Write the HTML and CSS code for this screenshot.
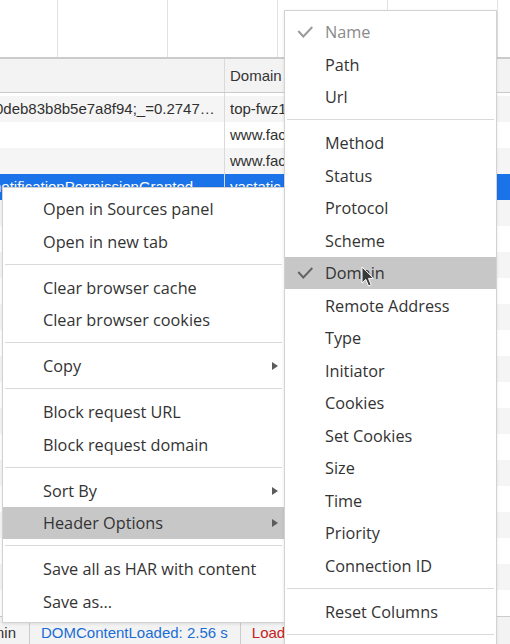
FILE: index.html
```html
<!DOCTYPE html>
<html>
<head>
<meta charset="utf-8">
<link rel="stylesheet" href="styles.css">
</head>
<body>
<div class="screen">
  <div class="overview">
    <div class="ov-col first"></div>
    <div class="ov-col"></div>
    <div class="ov-col"></div>
    <div class="ov-col"></div>
    <div class="ov-col"></div>
  </div>
  <div class="grid-head">
    <div class="cell name"></div>
    <div class="cell domain">Domain</div>
  </div>
  <div class="grid-body">
    <div class="row spacer"><div class="cell name"></div><div class="cell domain"></div></div>
    <div class="row alt"><div class="cell name"><span class="shift s5">0deb83b8b5e7a8f94;_=0.2747…</span></div><div class="cell domain">top-fwz1.mail.ru</div></div>
    <div class="row"><div class="cell name"></div><div class="cell domain">www.facebook.com</div></div>
    <div class="row alt"><div class="cell name"></div><div class="cell domain">www.facebook.com</div></div>
    <div class="row sel"><div class="cell name"><span class="shift s7">notificationPermissionGranted</span></div><div class="cell domain">yastatic.net</div></div>
    <div class="row alt"><div class="cell name"></div><div class="cell domain"></div></div>
    <div class="row"><div class="cell name"></div><div class="cell domain"></div></div>
    <div class="row alt"><div class="cell name"></div><div class="cell domain"></div></div>
    <div class="row"><div class="cell name"></div><div class="cell domain"></div></div>
    <div class="row alt"><div class="cell name"></div><div class="cell domain"></div></div>
    <div class="row"><div class="cell name"></div><div class="cell domain"></div></div>
    <div class="row alt"><div class="cell name"></div><div class="cell domain"></div></div>
    <div class="row"><div class="cell name"></div><div class="cell domain"></div></div>
    <div class="row alt"><div class="cell name"></div><div class="cell domain"></div></div>
    <div class="row"><div class="cell name"></div><div class="cell domain"></div></div>
    <div class="row alt"><div class="cell name"></div><div class="cell domain"></div></div>
    <div class="row"><div class="cell name"></div><div class="cell domain"></div></div>
    <div class="row alt"><div class="cell name"></div><div class="cell domain"></div></div>
    <div class="row"><div class="cell name"></div><div class="cell domain"></div></div>
    <div class="row alt"><div class="cell name"></div><div class="cell domain"></div></div>
    <div class="row"><div class="cell name"></div><div class="cell domain"></div></div>
  </div>
  <div class="status">
    <div class="st finish"><span>Finish: 1.2 min</span></div>
    <div class="st dcl">DOMContentLoaded: 2.56 s</div>
    <div class="st load">Load: 3.41 s</div>
  </div>

  <div class="menu main">
    <div class="item">Open in Sources panel</div>
    <div class="item">Open in new tab</div>
    <div class="sep"></div>
    <div class="item">Clear browser cache</div>
    <div class="item">Clear browser cookies</div>
    <div class="sep"></div>
    <div class="item">Copy<span class="arrow"></span></div>
    <div class="sep"></div>
    <div class="item">Block request URL</div>
    <div class="item">Block request domain</div>
    <div class="sep"></div>
    <div class="item">Sort By<span class="arrow"></span></div>
    <div class="item hl">Header Options<span class="arrow"></span></div>
    <div class="sep"></div>
    <div class="item">Save all as HAR with content</div>
    <div class="item">Save as...</div>
  </div>

  <div class="menu sub">
    <div class="item disabled"><svg class="check light" width="16" height="12" viewBox="0 0 16 12"><polyline points="1.3,5 6.3,10.5 15.3,1" /></svg>Name</div>
    <div class="item">Path</div>
    <div class="item">Url</div>
    <div class="sep"></div>
    <div class="item">Method</div>
    <div class="item">Status</div>
    <div class="item">Protocol</div>
    <div class="item">Scheme</div>
    <div class="item hl"><svg class="check" width="16" height="12" viewBox="0 0 16 12"><polyline points="1.3,5 6.3,10.5 15.3,1" /></svg>Domain</div>
    <div class="item">Remote Address</div>
    <div class="item">Type</div>
    <div class="item">Initiator</div>
    <div class="item">Cookies</div>
    <div class="item">Set Cookies</div>
    <div class="item">Size</div>
    <div class="item">Time</div>
    <div class="item">Priority</div>
    <div class="item">Connection ID</div>
    <div class="sep"></div>
    <div class="item">Reset Columns</div>
    <div class="sep"></div>
    <div class="item">Response Headers<span class="arrow"></span></div>
  </div>

  <svg class="cursor" width="14" height="22" viewBox="0 0 14 22">
    <path d="M1 1 L1 17 L4.8 13.4 L7.6 20 L10.2 18.9 L7.5 12.4 L12.6 12.4 Z" />
  </svg>
</div>
</body>
</html>
```

FILE: styles.css
```css
* { box-sizing: border-box; }
html, body { margin: 0; padding: 0; }
body {
  width: 510px;
  height: 644px;
  overflow: hidden;
  background: #fff;
  font-family: "Liberation Sans", Arial, sans-serif;
  font-size: 15px;
  color: #303030;
}
.screen {
  position: relative;
  width: 510px;
  height: 644px;
  overflow: hidden;
  display: flex;
  flex-direction: column;
}
.overview {
  height: 59px;
  flex: none;
  display: flex;
  border-bottom: 2px solid #cbcbcb;
}
.ov-col {
  width: 110px;
  flex: none;
  border-right: 1px solid #e2e2e2;
}
.ov-col.first { width: 58px; }

.grid-head {
  height: 34px;
  flex: none;
  display: flex;
  background: #f3f3f3;
  border-bottom: 1px solid #cbcbcb;
  line-height: 33px;
  color: #333;
}
.cell {
  overflow: hidden;
  white-space: nowrap;
}
.cell.name {
  width: 225px;
  flex: none;
  border-right: 1px solid #dadada;
}
.cell.domain {
  flex: 1;
  padding-left: 5px;
}
.grid-body {
  flex: 1;
  display: flex;
  flex-direction: column;
}
.row {
  height: 26px;
  flex: none;
  display: flex;
  line-height: 25px;
  color: #303030;
}
.row.spacer { height: 3px; }
.row.alt { background: #f5f5f5; }
.row.sel { background: #1a73e8; color: #fff; }
.shift { display: inline-block; }
.s5 { margin-left: -5px; }
.s7 { margin-left: -7px; }

.status {
  height: 28px;
  flex: none;
  display: flex;
  background: #f3f3f3;
  border-top: 1px solid #cbcbcb;
}
.st {
  padding-top: 7px;
  white-space: nowrap;
  border-right: 1px solid #cbcbcb;
}
.st.finish {
  width: 30px;
  overflow: hidden;
  display: flex;
  justify-content: flex-end;
  padding-right: 13px;
  color: #333;
}
.st.finish span { flex: none; }
.st.dcl { padding-left: 11px; padding-right: 12px; color: #1a6dd4; }
.st.load { padding-left: 11px; color: #c62121; border-right: none; }

.menu {
  position: absolute;
  background: #fff;
  border: 1px solid #d2d2d2;
  padding: 4.5px 0;
  font-family: "Open Sans", "Noto Sans", sans-serif;
  font-size: 16.25px;
  color: #333;
  box-shadow: 0 1px 3px rgba(0, 0, 0, 0.1);
}
.menu.main { left: 2px; top: 187px; width: 283px; }
.menu.sub { left: 284px; top: 10px; width: 213px; }
.item {
  position: relative;
  height: 32.5px;
  display: flex;
  align-items: center;
  padding-left: 40px;
  padding-right: 6px;
  padding-top: 1px;
  white-space: nowrap;
}
.item.hl { background: #c7c7c7; }
.item.disabled { color: #8a8a8a; }
.sep {
  height: 1px;
  margin: 6px 2px 6.5px;
  background: #d9d9d9;
}
.arrow {
  margin-left: auto;
  width: 0;
  height: 0;
  border-left: 6px solid #5c5c5c;
  border-top: 4px solid transparent;
  border-bottom: 4px solid transparent;
}
.check {
  position: absolute;
  left: 12px;
  top: 10px;
  fill: none;
  stroke: #646464;
  stroke-width: 2;
}
.check.light { stroke: #9a9a9a; }
.cursor {
  position: absolute;
  left: 361px;
  top: 266px;
}
.cursor path {
  fill: #3a3a3a;
  stroke: #fff;
  stroke-width: 1;
  stroke-linejoin: round;
}
```
